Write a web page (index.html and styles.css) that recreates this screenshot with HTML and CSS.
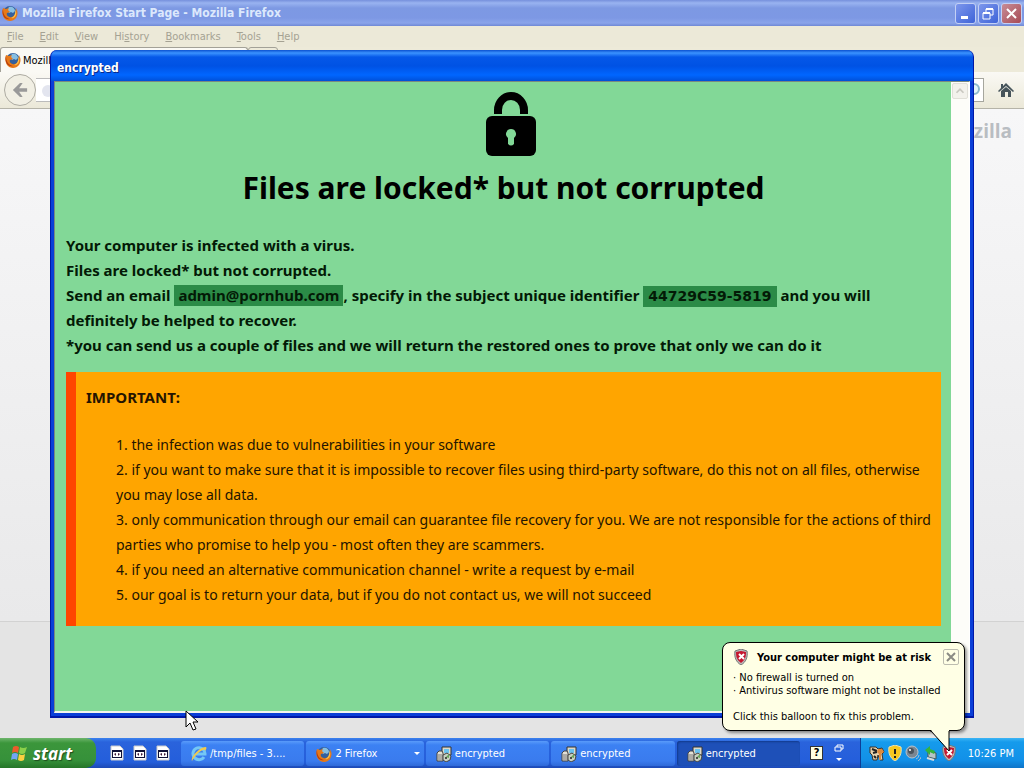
FILE: index.html
```html
<!DOCTYPE html>
<html lang="en">
<head>
<meta charset="utf-8">
<title>Desktop</title>
<link rel="stylesheet" href="styles.css">
</head>
<body>
<svg class="defs" aria-hidden="true">
  <symbol id="firefox" viewBox="0 0 16 16">
    <circle cx="8" cy="8" r="7" fill="#35609c"/>
    <path d="M7 2c3-1 6 1 6 4l-2 2-2-1-2 1-2-3z" fill="#86bfe2"/>
    <path d="M1 3C0 6 0 10 2 13c3 4 9 4 12 0 2-3 2-7 0-10 1 4-1 8-4 9-4 1-6-2-5-4l3-1-2-2 1-2-3 1z" fill="#e77918"/>
    <path d="M1 4c0 5 2 9 7 10-5 2-9-5-7-10z" fill="#b83c0c"/>
    <path d="M13 4c1 5-1 8-4 9 4 1 7-4 4-9z" fill="#fbc24a"/>
  </symbol>
  <symbol id="setup" viewBox="0 0 16 16">
    <path d="M6 1h9v8H6z" fill="#ddd8c8" stroke="#333"/>
    <path d="M8 3h5v4H8z" fill="#6bc2ef"/>
    <path d="M1 7l2-2h3l1 2v8H1z" fill="#e3e0d6" stroke="#444"/>
    <path d="M3 8v6M5 8v6" stroke="#777"/>
    <path d="M7 9l4-2 4 3-1 4-4 2-3-2z" fill="#c9d0c2" stroke="#444"/>
    <path d="M10 11l3-3v4z" fill="#68a558"/>
    <circle cx="10" cy="12" r="1" fill="#222"/>
  </symbol>
  <symbol id="page" viewBox="0 0 14 16">
    <path d="M1 1h9l3 3v11H1z" fill="#fff" stroke="#ccc"/>
    <path d="M2 5h10v8H2z" fill="#101035"/>
    <path d="M3 7h8v5H3z" fill="#fff"/>
    <path d="M4 9l2-1v3zM8 8l2 1-2 2z" fill="#401838"/>
  </symbol>
  <symbol id="shield" viewBox="0 0 16 16">
    <path d="M8 0l6 2c1 6-1 11-6 14C3 13 1 8 2 2z" fill="#bbb" stroke="#777"/>
    <path d="M8 2l5 1c0 5-1 8-5 11C4 11 3 8 3 3z" fill="#c5172f"/>
    <path d="M6 5l5 5M11 5l-5 5" stroke="#fff" stroke-width="2"/>
  </symbol>
</svg>

<div class="desktop">
  <main class="browser">
    <header class="titlebar">
      <svg class="icon"><use href="#firefox"/></svg>
      <span class="title">Mozilla Firefox Start Page - Mozilla Firefox</span>
      <div class="controls">
        <button class="control" aria-label="Minimize"><svg viewBox="0 0 19 19"><path d="M5 12h7v3H5z" fill="#fff"/></svg></button>
        <button class="control" aria-label="Restore"><svg viewBox="0 0 19 19"><path d="M7 8V5h7v6h-3M7 5h7M4 9h7v6H4z" fill="none" stroke="#fff"/><path d="M7 5h7M4 9h7" stroke="#fff" stroke-width="2"/></svg></button>
        <button class="control close" aria-label="Close"><svg viewBox="0 0 19 19"><path d="M5 5l9 9M14 5l-9 9" stroke="#fff" stroke-width="2"/></svg></button>
      </div>
    </header>
    <nav class="menu">
      <button><u>F</u>ile</button><button><u>E</u>dit</button><button><u>V</u>iew</button><button>Hi<u>s</u>tory</button><button><u>B</u>ookmarks</button><button><u>T</u>ools</button><button><u>H</u>elp</button>
    </nav>
    <div class="tabs">
      <div class="tab"><svg class="icon"><use href="#firefox"/></svg><span>Mozilla Firefox Start Page</span></div>
      <div class="newtab"></div>
    </div>
    <div class="toolbar">
      <button class="back" aria-label="Back"><svg viewBox="0 0 18 16"><path d="M9 0L1 8l8 8h3L8 10h9V6H8l4-6z" fill="#999"/></svg></button>
      <div class="address"><svg class="icon" viewBox="0 0 16 16"><circle cx="8" cy="8" r="6" fill="#e3e5ef"/></svg></div>
      <div class="search"><svg viewBox="0 0 14 14"><circle cx="5" cy="6" r="5" fill="#e4f5fa" stroke="#8db9cc" stroke-width="2"/></svg></div>
      <svg class="home" viewBox="0 0 16 16"><path d="M8 1l8 8-1 1-7-6-7 6-1-1 3-3V2h2v2z" fill="#46545a"/><path d="M8 5l5 4v6h-3v-5H7v5H3V9z" fill="#46545a"/></svg>
    </div>
    <div class="page"><span class="brand">mozilla</span></div>
    <div class="pagefoot"></div>
  </main>

  <section class="dialog" aria-label="encrypted">
    <h2 class="caption">encrypted</h2>
    <div class="view">
      <div class="note">
        <svg class="lock" viewBox="0 0 64 64"><path d="M26 22V18a13 14 0 0 1 26 0v4" fill="none" stroke="#000" stroke-width="8"/><rect x="14" y="24" width="50" height="40" rx="6"/><path d="M39 37a5 5 0 0 1 3 9v6q-3 3-6 0v-6a5 5 0 0 1 3-9z" fill="#82d897"/></svg>
        <h1>Files are locked* but not corrupted</h1>
        <div class="lead">
          <p>Your computer is infected with a virus.</p>
          <p>Files are locked* but not corrupted.</p>
          <p>Send an email <mark>admin@pornhub.com</mark>, specify in the subject unique identifier <mark class="ident">44729C59-5819</mark> and you will definitely be helped to recover.</p>
          <p>*you can send us a couple of files and we will return the restored ones to prove that only we can do it</p>
        </div>
        <div class="important">
          <strong>IMPORTANT:</strong>
          <ol>
            <li>the infection was due to vulnerabilities in your software</li>
            <li>if you want to make sure that it is impossible to recover files using third-party software, do this not on all files, otherwise you may lose all data.</li>
            <li>only communication through our email can guarantee file recovery for you. We are not responsible for the actions of third parties who promise to help you - most often they are scammers.</li>
            <li>if you need an alternative communication channel - write a request by e-mail</li>
            <li>our goal is to return your data, but if you do not contact us, we will not succeed</li>
          </ol>
        </div>
      </div>
      <div class="scroll"><button aria-label="Scroll up"><svg viewBox="0 0 16 16"><path d="M4 10l4-4 4 4" fill="none" stroke="#c9c8c0" stroke-width="2"/></svg></button></div>
    </div>
  </section>

  <footer class="taskbar">
    <button class="start"><svg viewBox="0 0 18 18"><path d="M3 3q3-2 6 0L8 9Q5 7 2 9z" fill="#ed5c2c"/><path d="M10 3q3 2 7 0l-2 6q-3 2-6 0z" fill="#8bd04a"/><path d="M2 10q3-2 6 0l-1 6q-3-2-6 0z" fill="#73a5f4"/><path d="M9 10q3 2 6 0l-1 6q-3 2-6 0z" fill="#fbd040"/></svg>start</button>
    <div class="quick"><svg><use href="#page"/></svg><svg><use href="#page"/></svg><svg><use href="#page"/></svg></div>
    <div class="tasks">
      <button class="task"><svg class="icon" viewBox="0 0 16 16"><path d="M13 11A6 6 0 1 1 14 8H5" fill="none" stroke="#74c7f5" stroke-width="3"/><path d="M1 15C-1 11 9 1 15 1c1 1 0 3-1 4 0-4-9 2-13 10z" fill="#f2ca4d"/></svg><span>/tmp/files - 3....</span></button>
      <button class="task"><svg class="icon"><use href="#firefox"/></svg><span>2 Firefox</span><i class="arrow"></i></button>
      <button class="task"><svg class="icon"><use href="#setup"/></svg><span>encrypted</span></button>
      <button class="task"><svg class="icon"><use href="#setup"/></svg><span>encrypted</span></button>
      <button class="task active"><svg class="icon"><use href="#setup"/></svg><span>encrypted</span></button>
    </div>
    <div class="lang">
      <button class="help" aria-label="Help">?</button>
      <svg viewBox="0 0 10 18"><path d="M3 3V1h6v4H7M1 3h6v4H1z" fill="none" stroke="#fff"/><path d="M2 14h6l-3 3z" fill="#fff"/></svg>
    </div>
    <div class="tray">
      <svg class="icon" viewBox="0 0 16 16"><path d="M1 2h6l2 2 4-1 2 4-2 2 1 6h-3l-2-5-1 5H4l-1-5-2-2z" fill="#e6d3ae" stroke="#3b3027"/><path d="M3 4l5 2M4 8l4-1M5 11l2 2" stroke="#222" stroke-width="2"/><path d="M9 4h4l2 3-3 2v6h-2V9L8 7z" fill="#e08a3a"/></svg>
      <svg class="icon" viewBox="0 0 16 16"><path d="M8 0l6 2c1 6-1 11-6 14C3 13 1 8 2 2z" fill="#f5c820" stroke="#e9e1b5"/><path d="M8 4v5M8 11v2" stroke="#222" stroke-width="2"/></svg>
      <svg class="icon" viewBox="0 0 16 16"><circle cx="7" cy="7" r="6" fill="#7b8792" stroke="#b9c3cc"/><circle cx="6" cy="6" r="3" fill="#4a535c"/><circle cx="5" cy="5" r="1" fill="#fff"/><path d="M11 14q3-1 3-4M13 16q3-2 3-4" fill="none" stroke="#a9bccd"/></svg>
      <svg class="icon" viewBox="0 0 16 16"><path d="M5 6l8 2v6l-8-2z" fill="#b7c4c6" stroke="#455"/><path d="M2 5l5-4v3l5 2-1 3-4-2v3z" fill="#35b33c"/><path d="M4 13l7 2" stroke="#ddd" stroke-width="2"/></svg>
      <svg class="icon"><use href="#shield"/></svg>
      <time>10:26 PM</time>
    </div>
  </footer>

  <aside class="balloon">
    <div class="balloonhead"><svg class="icon"><use href="#shield"/></svg><strong>Your computer might be at risk</strong><button aria-label="Close balloon"><svg viewBox="0 0 14 14"><path d="M3 3l8 8M11 3l-8 8" stroke="#8b8b84" stroke-width="2"/></svg></button></div>
    <p>· No firewall is turned on<br>· Antivirus software might not be installed</p>
    <p>Click this balloon to fix this problem.</p>
    <svg class="tail" viewBox="0 0 22 24"><path d="M1 0l18 21V0z" fill="#ffffe5"/><path d="M0 1h1l18 20V1" fill="none" stroke="#000"/></svg>
  </aside>
  <svg class="pointer" viewBox="0 0 14 22"><path d="M1 1v16l4-4 3 7 3-1-3-7h5z" fill="#fff" stroke="#000"/></svg>
</div>
</body>
</html>
```
FILE: styles.css
```css
* { box-sizing: border-box; }
body { margin: 0; font-family: "DejaVu Sans Condensed", "Noto Sans", sans-serif; font-size: 11px; color: #000; }
button { font: inherit; color: inherit; background: none; border: 0; padding: 0; margin: 0; }
svg { display: block; flex: none; }
.defs { position: absolute; width: 0; height: 0; }
.icon { width: 16px; height: 16px; }
.desktop { position: relative; height: 100vh; overflow: hidden; display: flex; flex-direction: column; }
.browser { flex: 1; min-height: 0; display: flex; flex-direction: column; background: #ece9d8; }

.titlebar { height: 26px; flex: none; display: flex; align-items: center; gap: 4px; padding: 0 2px; background: linear-gradient(#7690dc, #99b3f0 3px, #7d99e3 8px, #7d98e4 18px, #8aa4ea 23px, #6f88d5); color: #dce8fc; }
.title { flex: 1; font-size: 12px; font-weight: bold; }
.controls { display: flex; gap: 2px; }
.control { width: 21px; height: 21px; padding: 0; border: 1px solid #c3d0f5; border-radius: 3px; background: linear-gradient(135deg, #7d97ec, #3e63d8); }
.control.close { background: linear-gradient(135deg, #c78c96, #a84b55); }
.menu { height: 21px; flex: none; display: flex; align-items: center; gap: 16px; padding: 0 7px; color: #a5a293; }
.tabs { height: 25px; flex: none; display: flex; align-items: stretch; background: #edead9; }
.tab { width: 248px; display: flex; align-items: center; gap: 2px; padding: 0 4px; border: 1px solid #a3a197; border-bottom: 0; border-radius: 3px 3px 0 0; background: #faf9f4; white-space: nowrap; overflow: hidden; }
.newtab { width: 30px; border: 1px solid #a3a197; border-radius: 3px; }
.toolbar { height: 37px; flex: none; display: flex; align-items: center; gap: 14px; padding: 0 10px 0 4px; background: linear-gradient(#faf9f4, #ebe8d8); border-bottom: 1px solid #b5b3a8; }
.back { width: 32px; height: 32px; border: 1px solid #adaba2; border-radius: 50%; background: #f1efe4; display: grid; place-items: center; }
.back svg { width: 16px; height: 16px; }
.address { flex: 1; height: 24px; margin-left: -14px; padding: 4px; border: 1px solid #bbb; border-left: 0; background: #fff; }
.search { width: 160px; height: 24px; border: 1px solid #a6a69e; background: #fff; display: flex; align-items: center; justify-content: flex-end; }
.search svg { width: 14px; height: 14px; }
.home { width: 16px; height: 16px; }
.page { flex: 1; padding: 9px 12px; text-align: right; background: linear-gradient(#f7f7f8, #e9e9ea); }
.brand { font-family: "Open Sans", sans-serif; font-weight: bold; font-size: 19px; color: #b9bdc2; }
.pagefoot { height: 117px; flex: none; border-top: 1px solid #d2d2d2; background: #e4e4e4; }

.dialog { position: absolute; inset: 50px 50px 50px; display: flex; flex-direction: column; padding: 0 3px 3px; border-radius: 7px 7px 0 0; background: #0a3fd8; border: 1px solid #0018a8; border-top: 0; border-bottom-width: 2px; }
.caption { height: 31px; flex: none; margin: 0 -3px; padding: 10px 6px 0; border-radius: 7px 7px 0 0; font-size: 12px; line-height: 16px; color: #fff; text-shadow: 1px 1px #0a2a88; background: linear-gradient(#0a50d0, #3b93ff 3px, #0558e8 7px, #0052e4 16px, #0066ff 25px, #0050d8); }
.view { flex: 1; min-height: 0; display: flex; border: 1px solid #7a8a80; border-right-color: #fff; border-bottom: 2px solid #f4f5ee; }
.note { flex: 1; min-width: 0; overflow: hidden; padding: 10px 10px 10px 11px; background: #82d897; font-family: "Noto Sans", sans-serif; font-size: 15px; line-height: 25px; }
.lock { width: 64px; height: 64px; margin: 0 auto; }
h1 { margin: 12px 0 25px; text-align: center; font-size: 30px; line-height: 40px; }
.lead { margin: 0 0 14px; font-weight: bold; color: #031a06; }
.lead p { margin: 0; }
mark { display: inline-block; padding: 0 4px; line-height: 21px; background: #2b8b47; color: inherit; }
.ident { padding: 0 5px; font-family: "DejaVu Sans", sans-serif; font-size: 14px; }
.important { padding: 13px 10px 19px; border-left: 10px solid #ff4500; background: #ffa500; color: #241400; }
ol { margin: 22px 0 0; padding-left: 30px; list-style-position: inside; font-size: 14px; }
.scroll { width: 18px; flex: none; background: #fdfdf9; }
.scroll button { width: 16px; height: 16px; margin: 1px; border: 1px solid #e1e0d8; border-radius: 2px; background: #f3f2ec; }

.taskbar { height: 30px; flex: none; display: flex; align-items: stretch; color: #fff; background: linear-gradient(#3b82ee, #2a63dc 4px, #245edb 24px, #1d49b5); }
.start { width: 96px; display: flex; align-items: center; gap: 5px; padding: 0 10px; border-radius: 0 10px 10px 0; font-family: "Open Sans", sans-serif; font-size: 17px; font-weight: bold; font-style: italic; text-shadow: 1px 1px 1px #1d4d1d; background: linear-gradient(#6eb56c, #3b963b 5px, #36913a 22px, #257528); }
.start svg { width: 18px; height: 18px; }
.quick { width: 85px; display: flex; align-items: center; gap: 9px; padding: 0 14px; }
.quick svg { width: 14px; height: 16px; }
.tasks { flex: 1; min-width: 0; display: flex; gap: 2px; padding: 3px 0 2px; }
.task { flex: 1 1 0; min-width: 0; display: flex; align-items: center; gap: 3px; padding: 0 10px; border-radius: 3px; white-space: nowrap; background: linear-gradient(#5a9bfa, #3c81f3 4px, #3a7bee 20px, #2f69d8); }
.task.active { background: #1e50b8; box-shadow: inset 1px 1px 2px #123a8c; }
.arrow { margin-left: auto; border: 3px solid transparent; border-top-color: #fff; border-bottom: 0; }
.task:has(.arrow) { padding-right: 4px; }
.lang { width: 60px; display: flex; align-items: center; gap: 11px; padding-left: 10px; }
.help { width: 13px; height: 14px; background: #ffffe1; border: 1px solid #333; color: #000; font-weight: bold; line-height: 12px; }
.lang svg { width: 10px; height: 18px; }
.tray { width: 164px; display: flex; align-items: center; gap: 2px; padding: 0 10px 0 8px; border-left: 1px solid #0d3d96; background: linear-gradient(#3cb5f5, #159bec 4px, #1290e8 22px, #0f74c8); }
.tray time { margin-left: auto; }

.balloon { position: absolute; right: 59px; bottom: 37px; width: 243px; height: 89px; padding: 5px 5px 0 10px; border: 1px solid #000; border-radius: 8px; background: #ffffe5; box-shadow: 2px 2px 3px #0006; font-size: 11px; line-height: 13px; }
.balloonhead { display: flex; align-items: center; gap: 8px; height: 18px; }
.balloonhead button { width: 16px; height: 16px; margin-left: auto; border: 1px solid #bdbdb0; border-radius: 2px; }
.balloon p { margin: 5px 0 13px; }
.balloon p + p { margin: 0; }
.tail { position: absolute; right: 12px; bottom: -24px; width: 22px; height: 24px; }
.pointer { position: absolute; left: 185px; top: 710px; width: 14px; height: 22px; }
```
